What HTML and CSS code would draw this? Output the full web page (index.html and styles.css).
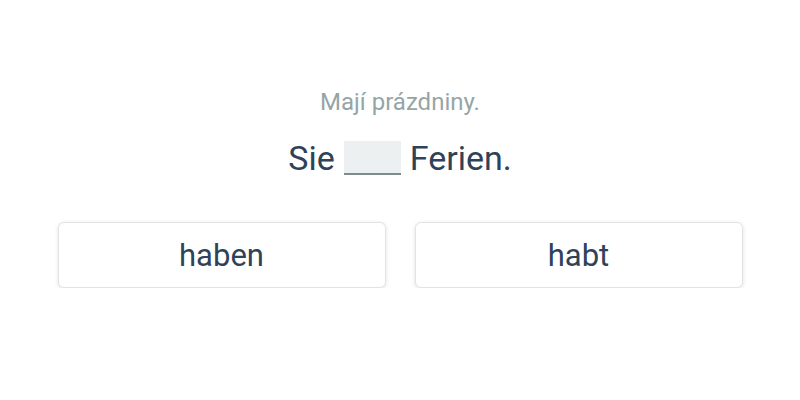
FILE: index.html
```html
<!DOCTYPE html>
<html>
<head>
<meta charset="utf-8">
<link rel="stylesheet" href="styles.css">
</head>
<body>
<main class="quiz">
  <p class="hint">Mají prázdniny.</p>
  <p class="sentence">Sie <span class="blank"></span> Ferien.</p>
  <div class="options">
    <button class="option">haben</button>
    <button class="option">habt</button>
  </div>
</main>
</body>
</html>
```
FILE: styles.css
```css
html, body {
  margin: 0;
  padding: 0;
  background: #ffffff;
}
body {
  font-family: Roboto, "Noto Sans", sans-serif;
  color: #2f4358;
}
.quiz {
  display: flex;
  flex-direction: column;
  align-items: center;
  padding-top: 86px;
}
.hint {
  margin: 0;
  font-size: 24px;
  line-height: 32px;
  color: #95a5a6;
}
.sentence {
  margin: 20px 0 0;
  font-size: 34px;
  line-height: 40px;
  color: #2f4358;
  display: flex;
  align-items: center;
  gap: 9px;
}
.blank {
  display: inline-block;
  width: 57px;
  height: 32px;
  background: #ecf0f1;
  border-bottom: 2px solid #7f8c8d;
}
.options {
  margin-top: 44px;
  display: flex;
  gap: 29px;
}
.option {
  width: 328px;
  height: 66px;
  background: #ffffff;
  border: 1px solid #e1e4e6;
  border-radius: 6px;
  box-shadow: 0 1px 4px rgba(0, 0, 0, 0.12);
  font-family: Roboto, "Noto Sans", sans-serif;
  font-size: 31px;
  color: #2f4358;
  padding: 0;
}
```
